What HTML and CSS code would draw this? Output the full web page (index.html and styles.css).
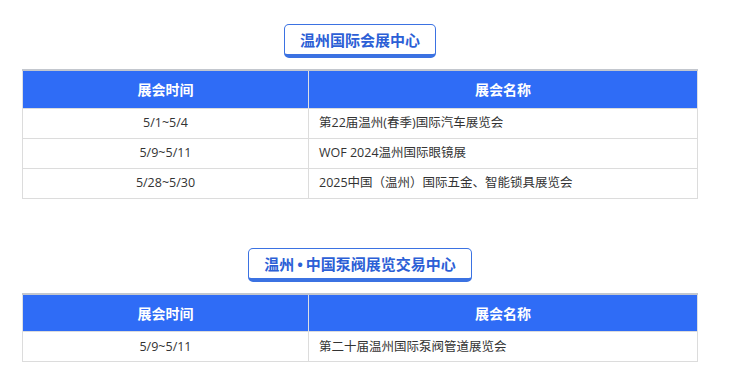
FILE: index.html
```html
<!DOCTYPE html>
<html lang="zh-CN">
<head>
<meta charset="utf-8">
<title>展会排期</title>
<link rel="stylesheet" href="styles.css">
</head>
<body>
<main class="page">
  <section class="venue">
    <div class="venue-head"><h2 class="venue-title">温州国际会展中心</h2></div>
    <table class="schedule">
      <colgroup><col class="col-date"><col class="col-name"></colgroup>
      <thead>
        <tr><th>展会时间</th><th>展会名称</th></tr>
      </thead>
      <tbody>
        <tr><td class="date">5/1~5/4</td><td class="name">第22届温州(春季)国际汽车展览会</td></tr>
        <tr><td class="date">5/9~5/11</td><td class="name">WOF 2024温州国际眼镜展</td></tr>
        <tr><td class="date">5/28~5/30</td><td class="name">2025中国（温州）国际五金、智能锁具展览会</td></tr>
      </tbody>
    </table>
  </section>

  <section class="venue venue-second">
    <div class="venue-head"><h2 class="venue-title">温州<span class="dot">•</span>中国泵阀展览交易中心</h2></div>
    <table class="schedule">
      <colgroup><col class="col-date"><col class="col-name"></colgroup>
      <thead>
        <tr><th>展会时间</th><th>展会名称</th></tr>
      </thead>
      <tbody>
        <tr><td class="date">5/9~5/11</td><td class="name">第二十届温州国际泵阀管道展览会</td></tr>
      </tbody>
    </table>
  </section>
</main>
</body>
</html>
```

FILE: styles.css
```css
* { box-sizing: border-box; }

html, body {
  margin: 0;
  padding: 0;
  background: #ffffff;
}

body {
  font-family: "Open Sans", "Noto Sans CJK SC", sans-serif;
  color: #333333;
}

.page {
  width: 676px;
  margin-left: 22px;
  padding-top: 24px;
}

.venue-second {
  margin-top: 49px;
}

.venue-head {
  display: flex;
  justify-content: center;
  margin-bottom: 11px;
}

.venue-title {
  margin: 0;
  padding: 5px 15px 4px;
  border: 1px solid #3b72e2;
  border-bottom-width: 4px;
  border-radius: 5px;
  font-family: "Noto Sans CJK SC", sans-serif;
  font-size: 15px;
  line-height: 20px;
  font-weight: 700;
  color: #2c5fd6;
  background: #ffffff;
}

/* narrow separator dot between the two place names */
.venue-title .dot {
  font-family: "Open Sans", sans-serif;
  margin: 0 3px;
}

.schedule {
  width: 100%;
  border-collapse: collapse;
  table-layout: fixed;
  border-top: 2px solid #c3c7ce;
}

.col-date { width: 286px; }

.schedule th {
  height: 38px;
  padding: 0;
  background: #2f6cf6;
  color: #ffffff;
  font-family: "Noto Sans CJK SC", sans-serif;
  font-size: 14px;
  font-weight: 700;
  text-align: center;
  border-left: 1px solid #dcdfe5;
  border-right: 1px solid #dcdfe5;
}

.schedule td {
  height: 30px;
  padding: 0 10px;
  font-size: 12.5px;
  line-height: 18px;
  border: 1px solid #dcdcdc;
  vertical-align: middle;
}

.schedule td.date {
  text-align: center;
}

.schedule td.name {
  text-align: left;
}
```
